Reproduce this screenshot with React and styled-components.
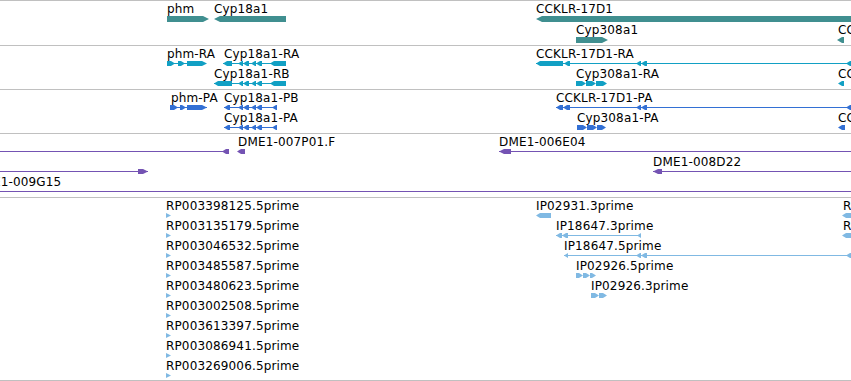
import React from "react";
import styled, { createGlobalStyle } from "styled-components";

const W = 851;

const GlobalStyle = createGlobalStyle`
  html, body { margin: 0; padding: 0; background: #fff; }
  body { font-family: "DejaVu Sans", "Liberation Sans", sans-serif; }
`;

const Browser = styled.div`
  width: ${W}px;
  height: 381px;
  overflow: hidden;
  border-top: 1px solid #c0c0c0;
  display: flex;
  flex-direction: column;
`;

const Track = styled.section`
  flex: none;
  height: ${(p) => p.$h}px;
  display: flex;
  flex-direction: column;
  border-bottom: 1px solid #c0c0c0;
  overflow: hidden;
`;

const Lane = styled.div`
  flex: none;
  display: flex;
  flex-direction: column;
  height: ${(p) => p.$h}px;
`;

const LabelStrip = styled.div`
  position: relative;
  flex: none;
  height: 15px;
`;

const Label = styled.span`
  position: absolute;
  top: 1px;
  font-size: 12px;
  line-height: 15px;
  letter-spacing: 0.15px;
  color: #000;
  white-space: nowrap;
`;

const Strip = styled.svg`
  display: block;
  flex: none;
  fill: ${(p) => p.$color};
`;

// glyph helpers
const A = (a, b, dir, tip = 4) => ({ kind: "arrow", a, b, dir, tip });
const L = (a, b) => ({ kind: "line", a, b });

function arrowPoints(a, b, h, dir, tip) {
  const t = Math.min(tip, b - a);
  const m = h / 2;
  if (dir > 0) return `${a},0 ${b - t},0 ${b},${m} ${b - t},${h} ${a},${h}`;
  return `${b},0 ${a + t},0 ${a},${m} ${a + t},${h} ${b},${h}`;
}

function GlyphStrip({ glyphs, h, color }) {
  return (
    <Strip width={W} height={h} $color={color}>
      {glyphs.map((g, i) =>
        g.kind === "line" ? (
          <rect key={i} x={g.a} y={Math.floor(h / 2)} width={g.b - g.a} height={1} />
        ) : (
          <polygon key={i} points={arrowPoints(g.a, g.b, h, g.dir, g.tip)} />
        )
      )}
    </Strip>
  );
}

const cyp18 = (s) => [
  L(s, 277),
  A(s, s + 6, -1),
  A(238, 243, -1),
  A(243, 249, -1),
  A(251, 256, -1),
  A(256, 262, -1),
  A(272, 277, -1),
];

const tracks = [
  {
    h: 44,
    color: "#408f90",
    lane: 21,
    strip: 6,
    lanes: [
      {
        labels: [[167, "phm"], [214, "Cyp18a1"], [536, "CCKLR-17D1"]],
        glyphs: [A(167, 209, 1, 6), A(214, 286, -1, 6), A(536, 880, -1, 6)],
      },
      {
        labels: [[576, "Cyp308a1"], [838, "CC"]],
        glyphs: [A(576, 608, 1, 6), A(837, 844, -1, 5)],
      },
    ],
  },
  {
    h: 43,
    color: "#12a0c4",
    lane: 20,
    strip: 5,
    lanes: [
      {
        labels: [[167, "phm-RA"], [224, "Cyp18a1-RA"], [536, "CCKLR-17D1-RA"]],
        glyphs: [
          L(167, 205), A(167, 175, 1), A(178, 185, 1), A(187, 207, 1, 5),
          L(223, 286), A(223, 232, -1), A(238, 243, -1), A(243, 249, -1),
          A(251, 256, -1), A(256, 262, -1), A(270, 286, -1),
          L(536, 851), A(536, 563, -1), A(564, 570, -1), A(636, 641, -1),
          A(641, 647, -1), A(846, 852, -1),
        ],
      },
      {
        labels: [[214, "Cyp18a1-RB"], [576, "Cyp308a1-RA"], [838, "CC"]],
        glyphs: [
          L(214, 286), A(214, 232, -1), A(238, 243, -1), A(243, 249, -1),
          A(251, 256, -1), A(256, 262, -1), A(270, 286, -1),
          A(576, 586, 1), A(586, 596, 1), A(596, 607, 1),
          A(838, 844, -1),
        ],
      },
    ],
  },
  {
    h: 43,
    color: "#3370d4",
    lane: 20,
    strip: 5,
    lanes: [
      {
        labels: [[171, "phm-PA"], [224, "Cyp18a1-PB"], [556, "CCKLR-17D1-PA"]],
        glyphs: [
          L(170, 207), A(170, 178, 1), A(180, 186, 1), A(187, 207, 1, 5),
          ...cyp18(224),
          L(556, 851), A(556, 563, -1), A(563, 570, -1), A(636, 641, -1),
          A(641, 647, -1), A(846, 852, -1),
        ],
      },
      {
        labels: [[224, "Cyp18a1-PA"], [577, "Cyp308a1-PA"], [838, "CC"]],
        glyphs: [
          ...cyp18(224),
          A(577, 587, 1), A(587, 597, 1), A(597, 606, 1),
          A(838, 845, -1),
        ],
      },
    ],
  },
  {
    h: 63,
    color: "#7453b3",
    lane: 20,
    strip: 5,
    lanes: [
      {
        labels: [[238, "DME1-007P01.F"], [499, "DME1-006E04"]],
        glyphs: [L(0, 228), A(222, 229, -1), A(237, 245, -1), L(499, 851), A(499, 511, -1, 5)],
      },
      {
        labels: [[653, "DME1-008D22"]],
        glyphs: [L(0, 148), A(138, 148, 1, 5), L(653, 851), A(653, 662, -1, 5)],
      },
      {
        labels: [[-27, "DME1-009G15"]],
        glyphs: [L(0, 851)],
      },
    ],
  },
];

const rpNames = [
  "RP003398125.5prime",
  "RP003135179.5prime",
  "RP003046532.5prime",
  "RP003485587.5prime",
  "RP003480623.5prime",
  "RP003002508.5prime",
  "RP003613397.5prime",
  "RP003086941.5prime",
  "RP003269006.5prime",
];

const estExtras = [
  {
    labels: [[536, "IP02931.3prime"], [843, "R"]],
    glyphs: [A(536, 551, -1), A(842, 860, -1)],
  },
  {
    labels: [[556, "IP18647.3prime"], [843, "R"]],
    glyphs: [L(556, 641), A(556, 562, -1), A(562, 568, -1), A(637, 641, -1), A(842, 860, -1)],
  },
  {
    labels: [[564, "IP18647.5prime"]],
    glyphs: [L(564, 851), A(564, 568, -1), A(636, 641, -1), A(641, 647, -1), A(846, 852, -1)],
  },
  {
    labels: [[576, "IP02926.5prime"]],
    glyphs: [A(576, 583, 1), A(583, 590, 1), A(590, 596, 1)],
  },
  {
    labels: [[591, "IP02926.3prime"]],
    glyphs: [A(591, 599, 1), A(599, 607, 1)],
  },
];

tracks.push({
  h: 182,
  color: "#80b9e3",
  lane: 20,
  strip: 5,
  lanes: rpNames.map((name, i) => {
    const extra = estExtras[i] || { labels: [], glyphs: [] };
    return {
      labels: [[166, name], ...extra.labels],
      glyphs: [A(166, 171, 1, 5), ...extra.glyphs],
    };
  }),
});

export default function App() {
  return (
    <>
      <GlobalStyle />
      <Browser>
        {tracks.map((t, ti) => (
          <Track key={ti} $h={t.h}>
            {t.lanes.map((ln, li) => (
              <Lane key={li} $h={t.lane}>
                <LabelStrip>
                  {ln.labels.map(([x, text]) => (
                    <Label key={text + x} style={{ left: x }}>
                      {text}
                    </Label>
                  ))}
                </LabelStrip>
                <GlyphStrip glyphs={ln.glyphs} h={t.strip} color={t.color} />
              </Lane>
            ))}
          </Track>
        ))}
      </Browser>
    </>
  );
}
